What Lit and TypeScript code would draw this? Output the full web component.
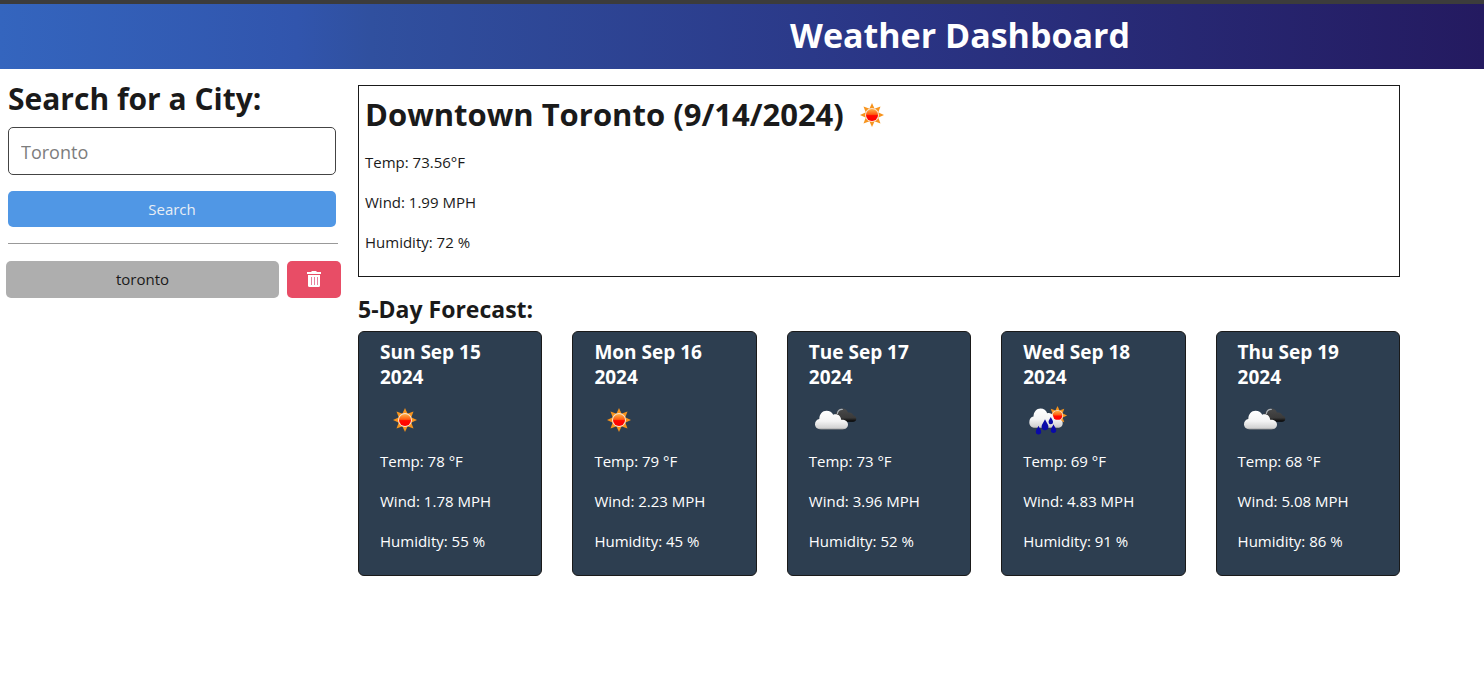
import { LitElement, html, svg, css } from "lit";
import { customElement, property, state } from "lit/decorators.js";

type Sky = "sun" | "clouds" | "rain";

interface Day {
  date: string;
  sky: Sky;
  temp: string;
  wind: string;
  humidity: string;
}

const FORECAST: Day[] = [
  { date: "Sun Sep 15 2024", sky: "sun", temp: "78", wind: "1.78", humidity: "55" },
  { date: "Mon Sep 16 2024", sky: "sun", temp: "79", wind: "2.23", humidity: "45" },
  { date: "Tue Sep 17 2024", sky: "clouds", temp: "73", wind: "3.96", humidity: "52" },
  { date: "Wed Sep 18 2024", sky: "rain", temp: "69", wind: "4.83", humidity: "91" },
  { date: "Thu Sep 19 2024", sky: "clouds", temp: "68", wind: "5.08", humidity: "86" },
];

const LABELS: Record<Sky, string> = {
  sun: "Clear sky",
  clouds: "Broken clouds",
  rain: "Rain with sun",
};

// Eight triangular rays around a glossy disc, centred on the origin.
const sunShape = svg`
  <g>
    ${[0, 45, 90, 135, 180, 225, 270, 315].map(
      (a) => svg`<path d="M-2.7 -6 L0 -12 L2.7 -6 Z" fill="#f7941d" transform="rotate(${a})"/>`,
    )}
    <circle r="7" fill="#fbe3cf"/>
    <circle r="6" fill="url(#disc)"/>
  </g>`;

const drop = (x: number, y: number, s: number) => svg`
  <path transform="translate(${x} ${y}) scale(${s})" fill="#0a0aa8"
    d="M0 -5 C1 -2.4 3 -.6 3 1.6 A3 3 0 0 1 -3 1.6 C-3 -.6 -1 -2.4 0 -5 Z"/>`;

@customElement("weather-icon")
class WeatherIcon extends LitElement {
  @property() sky: Sky = "sun";

  static styles = css`
    :host { display: inline-block; width: 50px; height: 50px; }
    .art { display: block; width: 100%; height: 100%; }
  `;

  private shape() {
    if (this.sky === "clouds") {
      return svg`
        <path fill="url(#dark)" d="M26 24 C26 17 29 13.500 33 13.500 C36 13.500 38 15 39 17.500 C42 17 44 18.500 44.500 20.500 C46.500 20.800 47.300 22.200 47.300 23.800 C47.300 25.800 46 26.800 44 26.800 H29 Z"/>
        <path fill="none" stroke="#a9b0b6" stroke-width="1.200" d="M28.300 19 C28.800 15.800 31 14.200 33.800 14.500"/>
        <path fill="url(#cloud)" d="M12 34.500 C8.400 34.500 6 32.300 6 29.300 C6 26.200 7.900 24.300 10.300 23.900 C10.400 19 13.400 15.800 17.500 15.800 C20.700 15.800 22.900 17.300 24.200 19.700 C28.500 18.400 31.700 20.800 32.200 24.800 C36 24.500 39 26.400 39 29.600 C39 32.600 36.800 34.500 33.500 34.500 Z"/>`;
    }
    if (this.sky === "rain") {
      return svg`
        <g transform="translate(34.500 20.500) scale(.8)">${sunShape}</g>
        <path fill="url(#cloud)" d="M12 33 C8.400 33 6.300 30.300 6.300 27.200 C6.300 24.100 8 22 10.500 21.600 C10.600 16.900 13.600 13.500 17.500 13.500 C20.800 13.500 23.200 15.400 24.200 18.300 C27.500 17 30.300 19.400 30.800 23.200 C31.200 24.400 33 25 35 24.800 C38 24.200 39.700 25.700 39.700 28 C39.700 31.200 37.500 33 34.500 33 Z"/>
        ${drop(15.5, 35.3, 0.9)}
        ${drop(22, 30, 1.15)}
        ${drop(27.8, 25.8, 0.75)}
        ${drop(30.5, 33.8, 0.9)}`;
    }
    return svg`<g transform="translate(25 25)">${sunShape}</g>`;
  }

  render() {
    return html`
      <svg class="art" viewBox="0 0 50 50" role="img" aria-label=${LABELS[this.sky]}>
        <defs>
          <linearGradient id="disc" x1="0" y1="0" x2="0" y2="1">
            <stop offset="0" stop-color="#ffb347"/>
            <stop offset=".45" stop-color="#ff5a10"/>
            <stop offset=".55" stop-color="#ff0a00"/>
            <stop offset="1" stop-color="#ff0000"/>
          </linearGradient>
          <linearGradient id="cloud" x1="0" y1="0" x2="0" y2="1">
            <stop offset="0" stop-color="#ffffff"/>
            <stop offset=".55" stop-color="#f4f4f4"/>
            <stop offset=".92" stop-color="#d2d2d2"/>
            <stop offset="1" stop-color="#8d8d8d"/>
          </linearGradient>
          <linearGradient id="dark" x1="0" y1="0" x2="0" y2="1">
            <stop offset="0" stop-color="#4a4a4a"/>
            <stop offset=".7" stop-color="#3a3a3a"/>
            <stop offset="1" stop-color="#000000"/>
          </linearGradient>
        </defs>
        ${this.shape()}
      </svg>`;
  }
}

@customElement("forecast-card")
class ForecastCard extends LitElement {
  @property({ attribute: false }) day!: Day;

  static styles = css`
    :host { display: block; }
    .card {
      box-sizing: border-box;
      height: 100%;
      padding: 8px 21px 22px;
      border: 1px solid #1a1a1a;
      border-radius: 6px;
      background: #2d3e50;
      color: #fff;
    }
    .date { margin: 0 0 5px; font-size: 19px; line-height: 25px; font-weight: 700; }
    .icon { display: block; }
    .reading { margin: 0 0 16px; font-size: 15px; line-height: 24px; }
    .icon + .reading { margin-top: 4px; }
    .reading:last-child { margin-bottom: 0; }
  `;

  render() {
    const d = this.day;
    return html`
      <article class="card">
        <h3 class="date">${d.date}</h3>
        <weather-icon class="icon" .sky=${d.sky}></weather-icon>
        <p class="reading">Temp: ${d.temp} °F</p>
        <p class="reading">Wind: ${d.wind} MPH</p>
        <p class="reading">Humidity: ${d.humidity} %</p>
      </article>`;
  }
}

@customElement("app-root")
class AppRoot extends LitElement {
  @state() private history = ["toronto"];

  static styles = css`
    :host {
      display: block;
      font-family: "Open Sans", "Noto Sans", sans-serif;
      font-size: 15px;
      line-height: 24px;
      color: #1a1a1a;
    }
    .header {
      padding: 7px 0 10px 436px;
      border-top: 4px solid #3c3c3c;
      background: linear-gradient(90deg, #3465be, #3155ad 20%, #30509f 25%, #2a3585 60%, #241a60);
      text-align: center;
      color: #fff;
    }
    .title { margin: 0; font-size: 34px; line-height: 48px; font-weight: 700; }
    .layout { display: flex; gap: 17px; padding: 0 84px 0 0; }
    .sidebar { flex: 0 0 341px; box-sizing: border-box; padding: 10px 0 0 8px; }
    .heading { display: block; margin: 0; font-size: 30px; line-height: 40px; font-weight: 700; }
    .form { display: grid; gap: 16px; padding-right: 5px; }
    .field { display: grid; gap: 8px; }
    .input {
      box-sizing: border-box;
      width: 100%;
      height: 48px;
      padding: 2px 12px 0;
      border: 1px solid #444;
      border-radius: 5px;
      background: #fff;
      font: 400 18px/24px "Open Sans", "Noto Sans", sans-serif;
      color: #1a1a1a;
    }
    .input::placeholder { color: #7d7d7d; opacity: 1; }
    .button {
      height: 36px;
      padding: 0;
      border: 0;
      border-radius: 5px;
      font: inherit;
      cursor: pointer;
    }
    .search { background: #5097e5; color: #e8eef5; }
    .rule { height: 1px; margin: 16px 3px 17px 0; border: 0; background: #999; }
    .history { display: grid; gap: 8px; margin: 0 0 0 -2px; padding: 0; list-style: none; }
    .entry { display: grid; grid-template-columns: 1fr 54px; gap: 8px; }
    .tall { height: 37px; padding-bottom: 1px; }
    .city { background: #aeaeae; color: #1a1a1a; }
    .delete { display: grid; place-items: center; background: #e84d66; color: #fff; }
    .bin { display: block; width: 16px; height: 18px; }
    .main { flex: 1; min-width: 0; padding-top: 16px; }
    .today { padding: 4px 6px 22px; border: 1px solid #1a1a1a; }
    .place { display: flex; gap: 3px; margin: 0; font-size: 31px; line-height: 48px; font-weight: 700; }
    .reading { margin: 16px 0 0; }
    .place + .reading { margin-top: 10px; }
    .subheading { margin: 16px 0 6px; font-size: 23px; line-height: 32px; font-weight: 700; }
    .cards { display: grid; grid-template-columns: repeat(5, 1fr); gap: 30px; }
  `;

  private search(e: Event) {
    e.preventDefault();
    const input = this.renderRoot.querySelector("input") as HTMLInputElement;
    const city = input.value.trim().toLowerCase();
    if (city && !this.history.includes(city)) this.history = [...this.history, city];
    input.value = "";
  }

  private remove(city: string) {
    this.history = this.history.filter((c) => c !== city);
  }

  render() {
    return html`
      <header class="header"><h1 class="title">Weather Dashboard</h1></header>
      <div class="layout">
        <aside class="sidebar">
          <form class="form" @submit=${this.search}>
            <div class="field">
              <label class="heading" for="city">Search for a City:</label>
              <input class="input" id="city" type="text" placeholder="Toronto" />
            </div>
            <button class="button search" type="submit">Search</button>
          </form>
          <hr class="rule" />
          <ul class="history">
            ${this.history.map(
              (city) => html`
                <li class="entry">
                  <button class="button tall city" type="button">${city}</button>
                  <button class="button tall delete" type="button" aria-label="Delete ${city}"
                    @click=${() => this.remove(city)}>
                    <svg class="bin" viewBox="0 0 16 18" aria-hidden="true">
                      <path fill="currentColor" d="M5.500 1 H10.500 V2 H15 V4 H1 V2 H5.500 Z"/>
                      <path fill="currentColor" d="M2 5 H14 V15.500 Q14 17 12.500 17 H3.500 Q2 17 2 15.500 Z"/>
                      <path stroke="#e8809f" stroke-width="1" d="M5.500 7 V15 M8.500 7 V15 M11.500 7 V15"/>
                    </svg>
                  </button>
                </li>`,
            )}
          </ul>
        </aside>
        <main class="main">
          <section class="today">
            <h2 class="place">Downtown Toronto (9/14/2024)<weather-icon sky="sun"></weather-icon></h2>
            <p class="reading">Temp: 73.56°F</p>
            <p class="reading">Wind: 1.99 MPH</p>
            <p class="reading">Humidity: 72 %</p>
          </section>
          <section>
            <h2 class="subheading">5-Day Forecast:</h2>
            <div class="cards">
              ${FORECAST.map((d) => html`<forecast-card .day=${d}></forecast-card>`)}
            </div>
          </section>
        </main>
      </div>`;
  }
}
